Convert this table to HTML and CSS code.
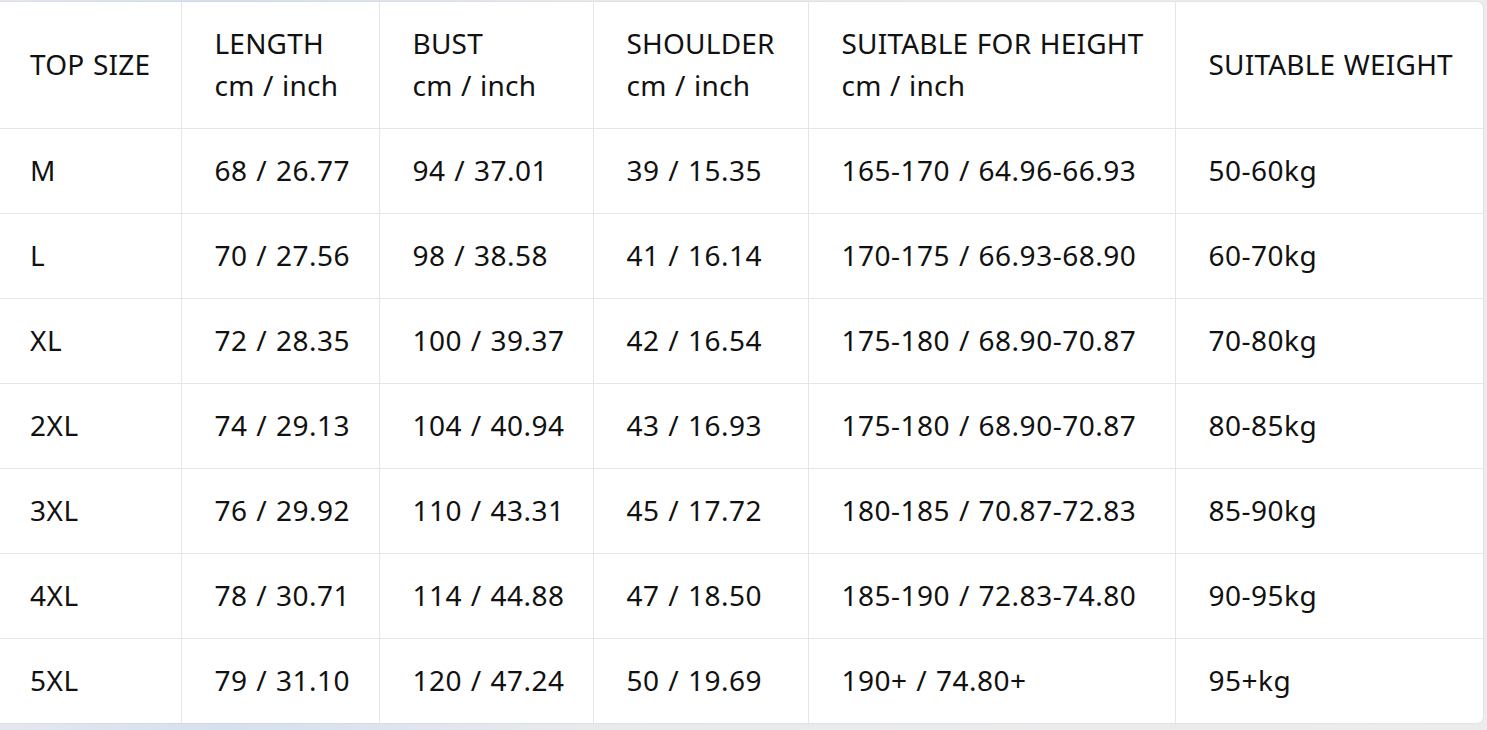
FILE: index.html
```html
<!DOCTYPE html>
<html>
<head>
<meta charset="utf-8">
<link rel="stylesheet" href="styles.css">
</head>
<body>
<div class="card">
<table class="sizes">
<colgroup>
<col class="c1"><col class="c2"><col class="c3"><col class="c4"><col class="c5"><col class="c6">
</colgroup>
<thead>
<tr>
<th>TOP SIZE</th>
<th>LENGTH<br>cm / inch</th>
<th>BUST<br>cm / inch</th>
<th>SHOULDER<br>cm / inch</th>
<th>SUITABLE FOR HEIGHT<br>cm / inch</th>
<th>SUITABLE WEIGHT</th>
</tr>
</thead>
<tbody>
<tr><td>M</td><td>68 / 26.77</td><td>94 / 37.01</td><td>39 / 15.35</td><td>165-170 / 64.96-66.93</td><td>50-60kg</td></tr>
<tr><td>L</td><td>70 / 27.56</td><td>98 / 38.58</td><td>41 / 16.14</td><td>170-175 / 66.93-68.90</td><td>60-70kg</td></tr>
<tr><td>XL</td><td>72 / 28.35</td><td>100 / 39.37</td><td>42 / 16.54</td><td>175-180 / 68.90-70.87</td><td>70-80kg</td></tr>
<tr><td>2XL</td><td>74 / 29.13</td><td>104 / 40.94</td><td>43 / 16.93</td><td>175-180 / 68.90-70.87</td><td>80-85kg</td></tr>
<tr><td>3XL</td><td>76 / 29.92</td><td>110 / 43.31</td><td>45 / 17.72</td><td>180-185 / 70.87-72.83</td><td>85-90kg</td></tr>
<tr><td>4XL</td><td>78 / 30.71</td><td>114 / 44.88</td><td>47 / 18.50</td><td>185-190 / 72.83-74.80</td><td>90-95kg</td></tr>
<tr><td>5XL</td><td>79 / 31.10</td><td>120 / 47.24</td><td>50 / 19.69</td><td>190+ / 74.80+</td><td>95+kg</td></tr>
</tbody>
</table>
</div>
</body>
</html>
```
FILE: styles.css
```css
html, body {
  margin: 0;
  padding: 0;
}
body {
  background: linear-gradient(90deg, #e4e8ee 0%, #d6e0f0 15%, #e9eaec 40%, #ececec 100%);
  height: 730px;
  overflow: hidden;
  font-family: "Noto Sans", "Open Sans", sans-serif;
  color: #111;
}
.card {
  margin: 2px 4px 0 0;
  width: 1483px;
  height: 721px;
  background: #fff;
  border-radius: 0 6px 6px 0;
  box-shadow: 0 0 2px rgba(0,0,0,0.12);
  overflow: hidden;
}
.sizes {
  border-collapse: collapse;
  table-layout: fixed;
  width: 1483px;
}
.c1 { width: 181px; }
.c2 { width: 198px; }
.c3 { width: 214px; }
.c4 { width: 215px; }
.c5 { width: 367px; }
.c6 { width: 308px; }
.sizes th, .sizes td {
  text-align: left;
  font-weight: 400;
  font-size: 28px;
  line-height: 42px;
  letter-spacing: 0.5px;
  word-spacing: 1px;
  padding: 0 0 2px 33px;
  border-left: 1px solid #e6e6e6;
  border-top: 1px solid #e6e6e6;
  white-space: nowrap;
  vertical-align: middle;
}
.sizes th {
  letter-spacing: 0.2px;
}
.sizes th:first-child, .sizes td:first-child {
  border-left: none;
  padding-left: 30px;
}
.sizes thead th {
  border-top: none;
  height: 124px;
}
.sizes tbody td {
  height: 82px;
}
```
